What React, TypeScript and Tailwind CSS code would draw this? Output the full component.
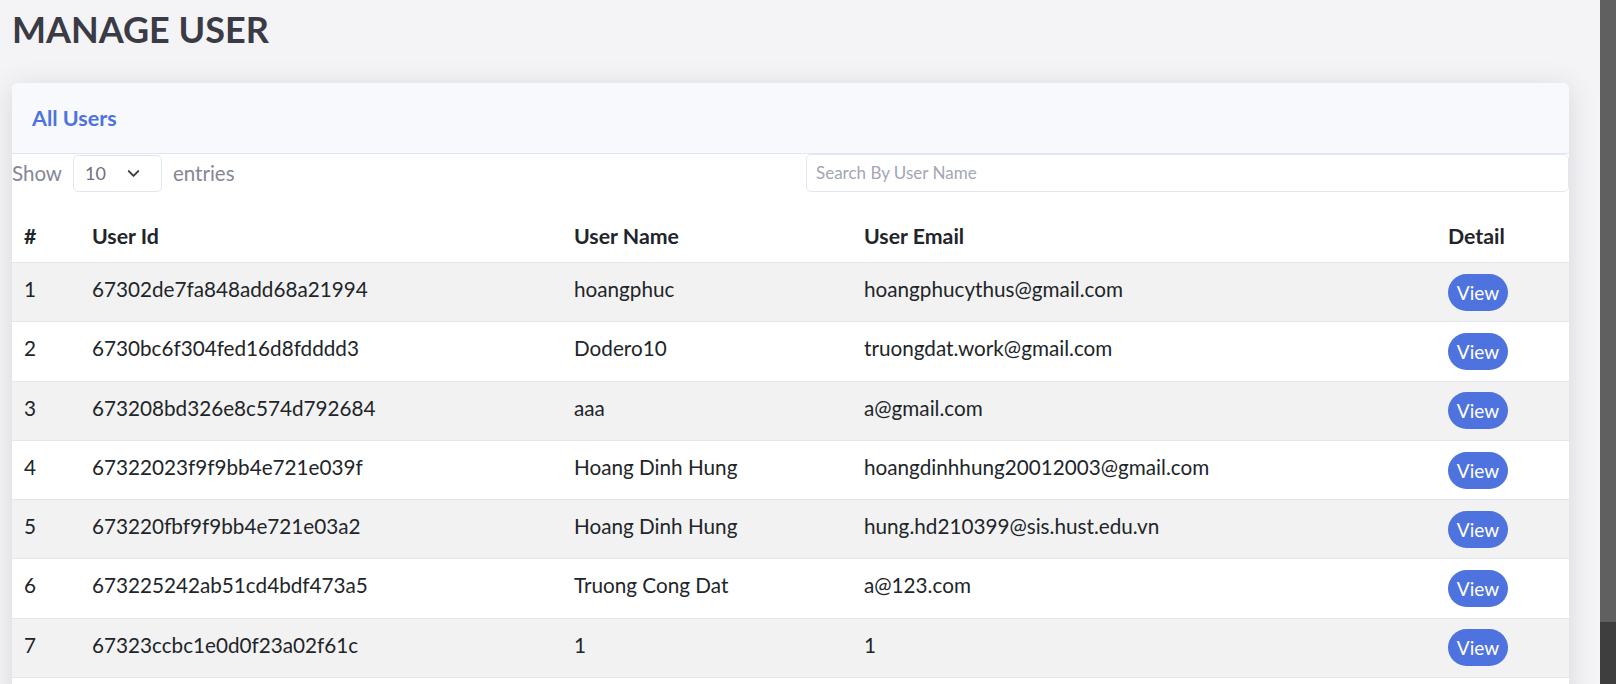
import { ChevronDown } from "lucide-react";

type User = {
  id: string;
  name: string;
  email: string;
};

const users: User[] = [
  { id: "67302de7fa848add68a21994", name: "hoangphuc", email: "hoangphucythus@gmail.com" },
  { id: "6730bc6f304fed16d8fdddd3", name: "Dodero10", email: "truongdat.work@gmail.com" },
  { id: "673208bd326e8c574d792684", name: "aaa", email: "a@gmail.com" },
  { id: "67322023f9f9bb4e721e039f", name: "Hoang Dinh Hung", email: "hoangdinhhung20012003@gmail.com" },
  { id: "673220fbf9f9bb4e721e03a2", name: "Hoang Dinh Hung", email: "hung.hd210399@sis.hust.edu.vn" },
  { id: "673225242ab51cd4bdf473a5", name: "Truong Cong Dat", email: "a@123.com" },
  { id: "67323ccbc1e0d0f23a02f61c", name: "1", email: "1" },
];

export default function App() {
  return (
    <div className="flex h-[684px] w-full overflow-hidden bg-[#f4f4f7] font-[Lato,'Noto_Sans',sans-serif]">
      <div className="flex-1 overflow-hidden">
        {/* page title */}
        <h1 className="ml-[12px] mt-[8px] text-[36px] font-bold leading-[42px] text-[#3a3b45]">
          MANAGE USER
        </h1>

        {/* card */}
        <div className="ml-[12px] mr-[31px] mt-[33px] overflow-hidden rounded-[6px] bg-white shadow-[0_4px_28px_0_rgba(58,59,69,0.15)]">
          <div className="border-b border-[#e3e6f0] bg-[#f8f9fc] px-[20px] py-[20px]">
            <h6 className="text-[21.5px] font-bold leading-[30px] text-[#4e73df]">All Users</h6>
          </div>

          {/* filters */}
          <div className="flex items-center justify-between">
            <div className="flex items-center text-[20.5px] text-[#858796]">
              <span>Show</span>
              <div className="ml-[11px] flex h-[37px] w-[89px] items-center justify-between rounded-[5px] border border-[#e3e6f0] pl-[11px] pr-[18px] text-[18px] text-[#6e707e]">
                <span>10</span>
                <ChevronDown size={19} strokeWidth={2.4} className="text-[#3a3b45]" />
              </div>
              <span className="ml-[11px]">entries</span>
            </div>
            <div className="flex h-[38px] w-[763px] items-center rounded-[5px] border border-[#e3e6f0] px-[9px] text-[17px] text-[#a3a6b4]">
              Search By User Name
            </div>
          </div>

          {/* table */}
          <table className="w-full table-fixed border-collapse text-[20.7px] text-[#212529]">
            <colgroup>
              <col className="w-[68px]" />
              <col className="w-[482px]" />
              <col className="w-[290px]" />
              <col className="w-[584px]" />
              <col />
            </colgroup>
            <thead>
              <tr className="border-b border-[#e3e6f0] text-[21.3px]">
                <th className="px-3 pb-[13px] pt-[32px] text-left font-bold leading-[25px]">#</th>
                <th className="px-3 pb-[13px] pt-[32px] text-left font-bold leading-[25px]">User Id</th>
                <th className="px-3 pb-[13px] pt-[32px] text-left font-bold leading-[25px]">User Name</th>
                <th className="px-3 pb-[13px] pt-[32px] text-left font-bold leading-[25px]">User Email</th>
                <th className="px-3 pb-[13px] pt-[32px] text-left font-bold leading-[25px]">Detail</th>
              </tr>
            </thead>
            <tbody>
              {users.map((u, i) => (
                <tr
                  key={u.id}
                  className={`h-[59.3px] border-b border-[#e3e6f0] ${i % 2 === 0 ? "bg-[#f2f2f2]" : "bg-white"}`}
                >
                  <td className="px-3 pt-[14px] align-top leading-[25px]">{i + 1}</td>
                  <td className="px-3 pt-[14px] align-top leading-[25px]">{u.id}</td>
                  <td className="px-3 pt-[14px] align-top leading-[25px]">{u.name}</td>
                  <td className="px-3 pt-[14px] align-top leading-[25px]">{u.email}</td>
                  <td className="px-3 align-middle">
                    <button className="h-[37px] w-[60px] rounded-full bg-[#4e73df] text-[19px] leading-none text-white">
                      View
                    </button>
                  </td>
                </tr>
              ))}
              <tr className="h-[59.3px] bg-white">
                <td colSpan={5} />
              </tr>
            </tbody>
          </table>
        </div>
      </div>

      {/* browser scrollbar */}
      <div className="flex w-[16px] flex-col bg-[#3e3e3e]">
        <div className="h-[622px] bg-[#606060]" />
      </div>
    </div>
  );
}
